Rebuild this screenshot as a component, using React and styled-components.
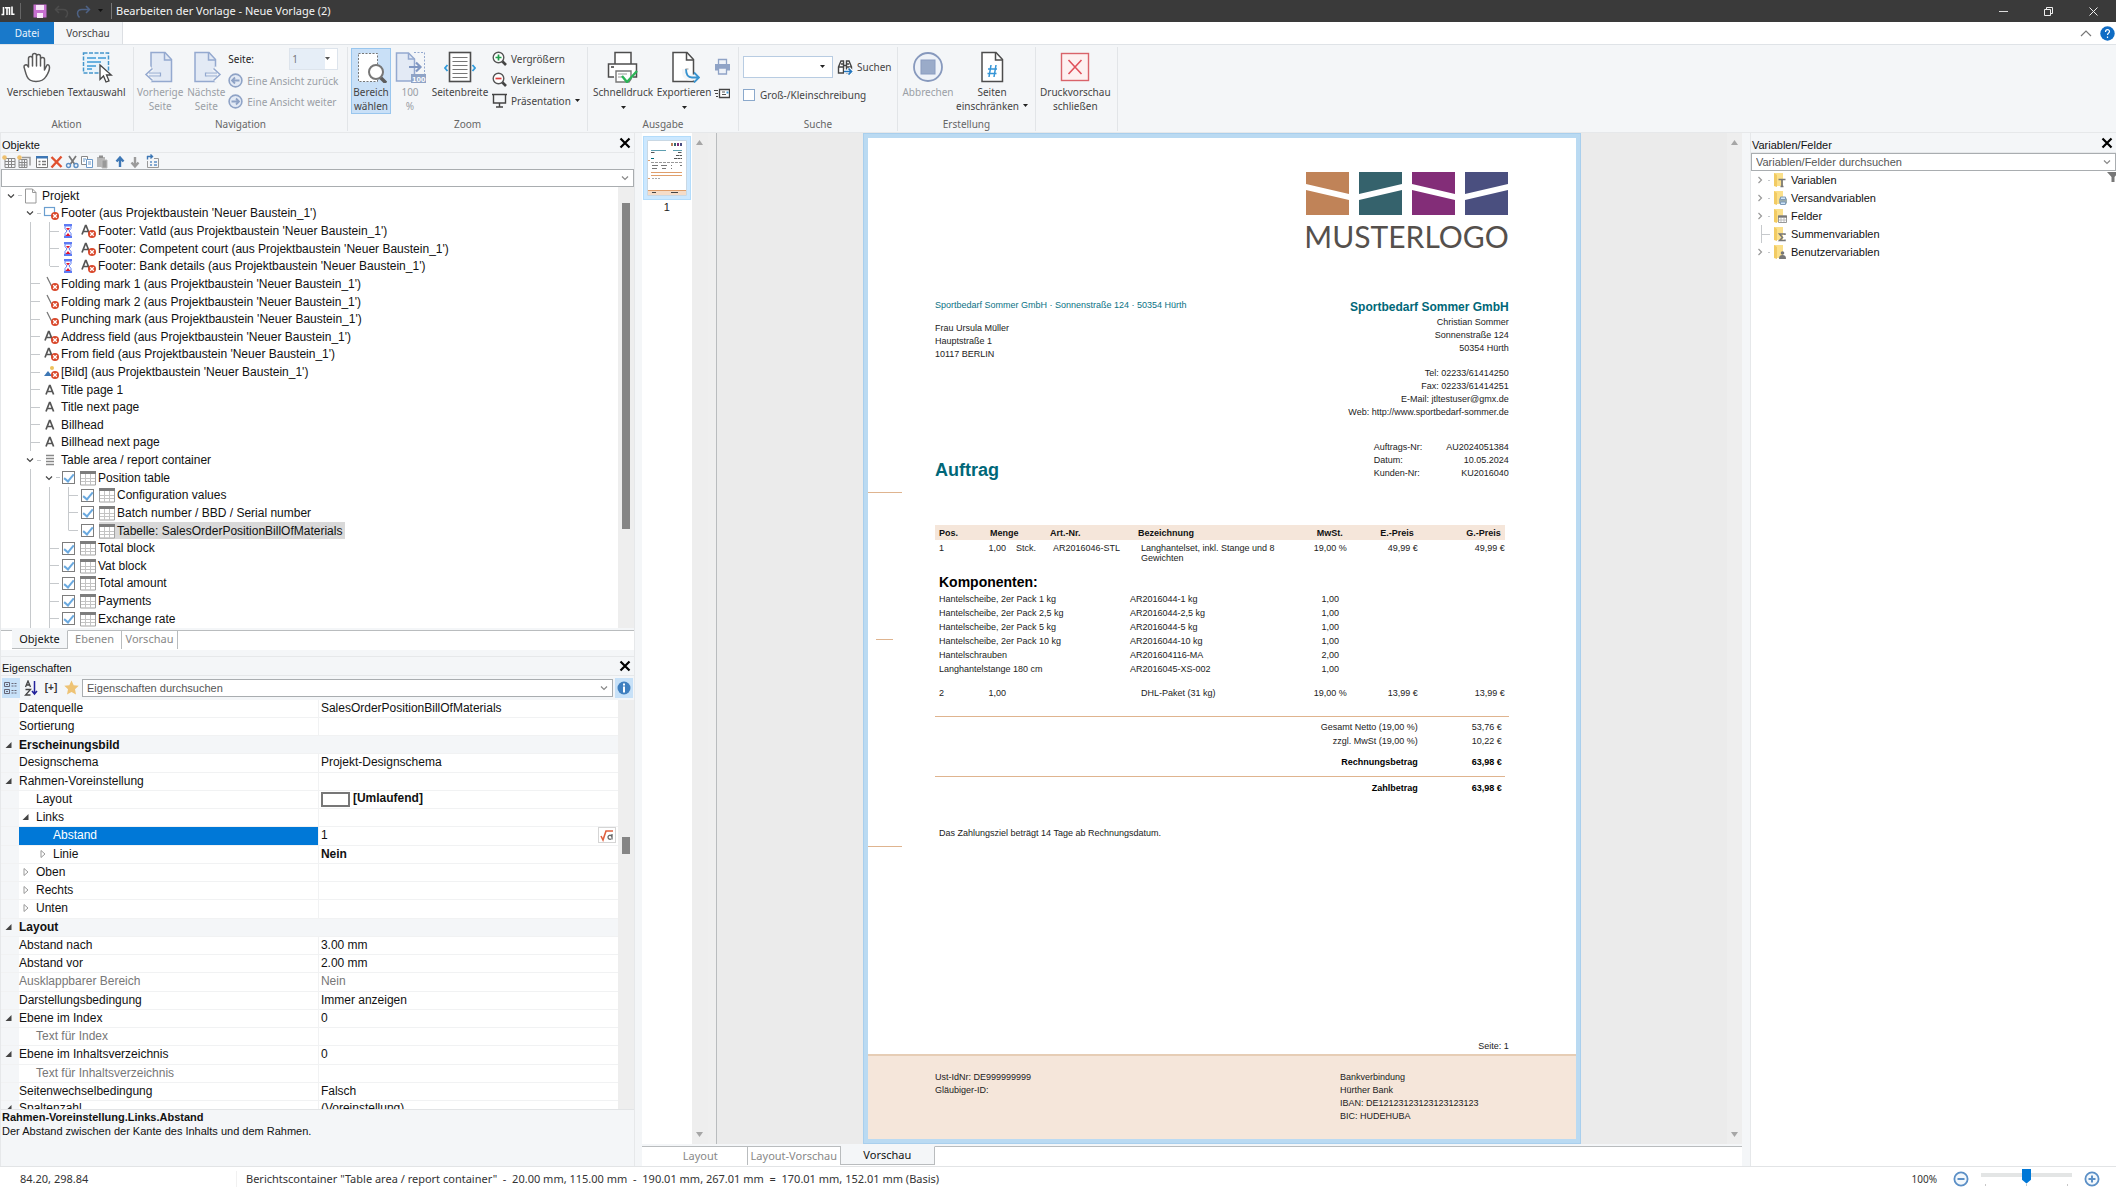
import React from 'react'
import styled, { createGlobalStyle, css } from 'styled-components'

const ui = `'Noto Sans', 'Open Sans', sans-serif`
const arial = `'Liberation Sans', Arial, sans-serif`

const GlobalStyle = createGlobalStyle`
  * { box-sizing: border-box; }
  html, body, #root { height: 100%; margin: 0; }
  body { font: 11px/16px ${ui}; color: #222; background: #fff; overflow: hidden; }
  button, input, select { font: inherit; color: inherit; margin: 0; }
  button { border: 0; padding: 0; background: none; }
  svg { display: block; flex: none; }
`

const Window = styled.div`
  display: flex;
  flex-direction: column;
  height: 100vh;
`

/* ---------- title bar ---------- */

const TitleBar = styled.header`
  display: flex;
  align-items: center;
  height: 22px;
  padding-left: 1px;
  background: #3a3a3a;
  color: #f4f4f4;
  font-size: 11px;
`

const QuickAccess = styled.div`
  display: flex;
  align-items: center;
  gap: 7px;
  margin-right: 4px;
  padding: 0 8px 0 3px;
  border-right: 1px solid #777;
`

const WindowButtons = styled.div`
  display: flex;
  margin-left: auto;

  button {
    display: grid;
    place-items: center;
    width: 45px;
    height: 22px;
  }
`

const MenuTabs = styled.nav`
  display: flex;
  align-items: center;
  height: 22px;
  font-size: 10px;
  color: #444;
`

const MenuTab = styled.button`
  align-self: stretch;
  width: ${p => (p.$file ? 54 : 69)}px;
  background: ${p => (p.$file ? '#1979ca' : '#f4f6f8')};
  color: ${p => (p.$file ? '#e8f3fc' : '#444')};
  border-right: ${p => (p.$file ? 0 : '1px solid #dcdfe3')};
`

const MenuEnd = styled.div`
  display: flex;
  align-items: center;
  gap: 8px;
  margin-left: auto;
  padding-right: 1px;
`

/* ---------- ribbon ---------- */

const Ribbon = styled.div`
  display: flex;
  height: 89px;
  border-top: 1px solid #dfe3e7;
  border-bottom: 1px solid #e6e8ea;
  background: #f4f6f8;
  font-size: 10px;
  line-height: 14px;
  color: #444;
`

const Group = styled.section`
  display: flex;
  flex-direction: column;
  width: ${p => p.$width}px;
  margin: 2px 0 1px;
  border-right: 1px solid #e2e5e8;
`

const GroupBody = styled.div`
  display: flex;
  flex: 1;
  align-items: flex-start;
  gap: ${p => p.$gap || 0}px;
  padding: 1px 0 0 ${p => p.$pad}px;
`

const GroupLabel = styled.div`
  height: 14px;
  text-align: center;
  color: #666;
`

const BigButton = styled.button`
  display: flex;
  flex-direction: column;
  align-items: center;
  gap: 2px;
  min-width: ${p => p.$width || 40}px;
  height: 66px;
  padding: 2px 0;
  border: 1px solid transparent;
  white-space: nowrap;
  color: ${p => (p.disabled ? '#9a9fa6' : '#444')};
  ${p =>
    p.$active &&
    css`
      background: #c9e0f7;
      border-color: #99c6ee;
    `}
`

const Stack = styled.div`
  display: flex;
  flex-direction: column;
  gap: ${p => p.$gap || 0}px;
  padding-top: ${p => p.$top || 0}px;
`

const SmallButton = styled.button`
  display: flex;
  align-items: center;
  gap: 4px;
  height: 21px;
  white-space: nowrap;
  color: ${p => (p.disabled ? '#9a9fa6' : '#444')};
`

const PageField = styled.label`
  display: flex;
  align-items: center;
  justify-content: space-between;
  height: 22px;
  color: #222;
`

const SelectBox = styled.span`
  display: grid;
  grid-template-columns: 1fr 12px;
  align-items: center;
  width: ${p => p.$width}px;
  height: 22px;
  border: 1px solid ${p => (p.$tint ? '#dde4ec' : '#b8cce2')};
  background: #fff;

  select,
  input {
    width: 100%;
    height: 100%;
    min-width: 0;
    padding: 0 2px;
    border: 0;
    border-radius: 0;
    appearance: none;
    background: ${p => (p.$tint ? '#e6eef7' : '#fff')};
    color: #777;
  }
`

const CheckLabel = styled.label`
  display: flex;
  align-items: center;
  gap: 5px;
`

const CheckBox = styled.input.attrs({ type: 'checkbox' })`
  appearance: none;
  flex: none;
  display: grid;
  place-items: center;
  width: ${p => p.$size || 12}px;
  height: ${p => p.$size || 12}px;
  border: 1px solid ${p => (p.$size ? '#7d7d7d' : '#8ba9cc')};
  background: #fff;

  &:checked::after {
    content: '';
    width: 4px;
    height: 8px;
    margin-bottom: 2px;
    border: solid #6aa9df;
    border-width: 0 2px 2px 0;
    transform: rotate(40deg);
  }
`

/* ---------- panels ---------- */

const Workspace = styled.main`
  display: grid;
  grid-template-columns: 30% minmax(0, 1fr) 17.3%;
  gap: 7px;
  flex: 1;
  min-height: 0;
  background: #f4f6f8;
`

const Dock = styled.aside`
  display: flex;
  flex-direction: column;
  min-width: 0;
  min-height: 0;
  border: solid #e6e8ea;
  border-width: 0 ${p => (p.$white ? 0 : 1)}px 0 1px;
  font-family: ${arial};
  font-size: ${p => p.$size || 12}px;
  color: #111;
  background: ${p => (p.$white ? '#fff' : '#f4f6f8')};
`

const DockTitle = styled.div`
  display: flex;
  align-items: center;
  justify-content: space-between;
  height: 20px;
  padding: 4px 3px 0 1px;
  border-bottom: 1px solid #e6e8ea;
  border-top: ${p => (p.$split ? '1px solid #e6e8ea' : 0)};
  margin-top: ${p => (p.$split ? 6 : 0)}px;
  background: #f4f6f8;

  h2 {
    margin: 0;
    font-size: 11px;
    font-weight: 400;
  }
  button {
    margin-top: -4px;
  }
`

const ObjectTools = styled.div`
  display: flex;
  align-items: center;
  height: 16px;
  padding-left: 1px;

  i {
    width: 3px;
  }
`

const Combo = styled.div`
  display: flex;
  align-items: center;
  flex: ${p => (p.$grow ? 1 : 'none')};
  height: 18px;
  padding-right: 4px;
  border: 1px solid #a9adb0;
  background: #fff;

  input {
    flex: 1;
    min-width: 0;
    padding: 0 4px;
    border: 0;
    background: none;
    outline: none;
    font-size: 11px;
  }
  input::placeholder {
    color: #555;
    opacity: 1;
  }
`

const Scrolled = styled.div`
  display: grid;
  grid-template-columns: minmax(0, 1fr) 16px;
  flex: ${p => p.$flex};
  min-height: 0;
  background: #fff;
`

const ScrollTrack = styled.div`
  display: flex;
  flex-direction: column;
  align-items: center;
  padding: ${p => p.$pad || '0'};
  justify-content: ${p => (p.$arrows ? 'space-between' : 'flex-start')};
  background: #eeeeee;
`

const ScrollThumb = styled.span`
  width: 8px;
  height: ${p => p.$height};
  margin-top: ${p => p.$top};
  margin-left: 1px;
  background: #858585;
`

const Tree = styled.ul`
  display: grid;
  grid-auto-rows: minmax(0, 1fr);
  margin: 0;
  padding: 0;
  list-style: none;
  overflow: hidden;
`

const TreeItem = styled.li`
  display: flex;
  align-items: center;
  white-space: nowrap;
`

const guide = '#c6c9cc'

const Guide = styled.span`
  align-self: stretch;
  width: 19px;
  background: ${p => (p.$on ? `linear-gradient(${guide}, ${guide}) 10px 0 / 1px 100% no-repeat` : 'none')};
`

const Branch = styled.span`
  display: flex;
  align-items: center;
  align-self: stretch;
  width: ${p => (p.$tight ? 19 : 22)}px;
  margin-right: 1px;
  padding-left: ${p => (p.$tight ? 5 : 6)}px;
  background: ${p =>
    p.$kind === 'leaf' || p.$kind === 'last'
      ? `linear-gradient(${guide}, ${guide}) 10px 0 / 1px ${p.$kind === 'last' ? '50%' : '100%'} no-repeat,
         linear-gradient(${guide}, ${guide}) 11px 50% / 9px 1px no-repeat`
      : `linear-gradient(${guide}, ${guide}) 17px 50% / 4px 1px no-repeat`};
`

const CheckSlot = styled.span`
  display: grid;
  width: 17px;
  margin-right: 1px;
`

const TreeName = styled.span`
  display: flex;
  align-items: center;
  align-self: stretch;
  gap: 2px;
  padding-right: 3px;
  background: ${p => (p.$selected ? '#d9d9d9' : 'none')};
`

const IconSlot = styled.span`
  display: grid;
  place-items: center;
  width: 16px;
`

const DockTabs = styled.div`
  display: flex;
  height: 22px;
  border-top: 2px solid #f4f6f8;
  background: #fff;
  font: 11px/16px ${ui};
`

const DockTab = styled.button`
  min-width: ${p => p.$width}px;
  height: 19px;
  padding-bottom: 1px;
  white-space: nowrap;
  border-top: 1px solid ${p => (p.$active ? '#f4f6f8' : '#b9bcbe')};
  border-right: 1px solid #b9bcbe;
  border-bottom: ${p => (p.$active ? '1px solid #b9bcbe' : 0)};
  background: ${p => (p.$active ? '#f4f6f8' : '#fff')};
  color: ${p => (p.$active ? '#111' : '#888')};
`

const TabRule = styled.span`
  width: ${p => p.$width || 'auto'};
  flex: ${p => (p.$width ? 'none' : 1)};
  border-top: 1px solid #b9bcbe;
`

/* ---------- properties ---------- */

const PropTools = styled.div`
  display: flex;
  align-items: center;
  gap: 2px;
  height: 24px;
  padding: 0 1px;
`

const ToolToggle = styled.button`
  display: grid;
  place-items: center;
  width: 18px;
  height: 20px;
  background: ${p => (p.$on ? '#c7e1f8' : 'none')};
  color: #333;
  font: bold 10px/16px ${arial};
`

const PropTable = styled.table`
  display: grid;
  min-height: 0;
  overflow: hidden;
  border-spacing: 0;

  tbody {
    display: grid;
    min-height: 0;
    grid-template-rows: repeat(22, minmax(0, 1fr)) 8px;
  }
`

const PropRow = styled.tr`
  display: grid;
  grid-template-columns: 18px minmax(0, 300fr) minmax(0, 301fr);
  min-height: 0;
  overflow: hidden;
  line-height: 14px;
  color: ${p => (p.$dim ? '#777' : '#111')};
  background: ${p => (p.$head ? '#f4f6f8' : 'linear-gradient(90deg, #f4f6f8 18px, #fff 18px)')};
`

const PropName = styled.th`
  display: flex;
  align-items: center;
  grid-column: ${p => (p.$head ? '1 / -1' : '1 / 3')};
  gap: 4px;
  padding: 0 0 ${p => (p.$head ? 0 : 1)}px ${p => p.$level * 17 + 4}px;
  text-align: left;
  font-weight: ${p => (p.$head ? 700 : 400)};
  white-space: nowrap;
  border-bottom: 1px solid #f1f2f3;
  ${p =>
    p.$selected &&
    css`
      color: #fff;
      background: linear-gradient(90deg, #f4f6f8 18px, #0078d7 18px);
    `}
`

const Twisty = styled.span`
  width: 10px;
`

const PropValue = styled.td`
  display: flex;
  align-items: center;
  justify-content: space-between;
  padding: 0 2px 1px;
  border: solid #f1f2f3;
  border-width: 0 0 1px 1px;
  font-weight: ${p => (p.$bold ? 700 : 400)};
  white-space: nowrap;
`

const Swatch = styled.span`
  display: inline-block;
  width: 29px;
  height: 15px;
  margin-right: 3px;
  vertical-align: middle;
  border: 2px solid #777;
`

const FormulaButton = styled.button`
  display: grid;
  place-items: center;
  width: 18px;
  height: 16px;
  border: 1px solid #d5d5d5;
`

const HelpText = styled.div`
  height: 57px;
  padding: 0 1px;
  border-top: 1px solid #e2e4e6;
  font-size: 11px;
  line-height: 14px;

  p, h3 {
    margin: 0;
    font-size: inherit;
  }
`

/* ---------- preview ---------- */

const Center = styled.section`
  display: flex;
  flex-direction: column;
  min-width: 0;
  min-height: 0;
  margin-right: 1px;
`

const PreviewArea = styled.div`
  display: grid;
  grid-template-columns: 50px 16px 9px minmax(0, 1fr) 15px;
  flex: 1;
  min-height: 0;
`

const Thumbs = styled.div`
  background: #fff;
  padding: 3px 1px;
  text-align: center;
  font: 11px/14px ${arial};
`

const Thumb = styled.button`
  display: grid;
  place-items: center;
  width: 100%;
  height: 64px;
  background: #cce8ff;
  border: 1px solid #b3dcfb;
`

const Splitter = styled.div`
  background: #efefef;
  border-right: 1px solid #b9bcbe;
`

const Canvas = styled.div`
  display: flex;
  justify-content: center;
  min-height: 0;
  background: #ebebeb;
`

const PageFrame = styled.div`
  display: flex;
  height: 100%;
  padding: 4px;
  border: 1px solid #a9cfed;
  background: #badaf2;
`

const Paper = styled.article`
  position: relative;
  display: flex;
  flex-direction: column;
  height: 100%;
  aspect-ratio: 210 / 297;
  background: #fff;
  font: 9px/13px ${arial};
  color: #222;
`

const FoldMark = styled.span`
  position: absolute;
  left: ${p => (p.$punch ? '1.2%' : 0)};
  top: ${p => p.$top};
  width: ${p => (p.$punch ? '2.4%' : '4.8%')};
  border-top: 1px solid #dfb48f;
`

const Letter = styled.div`
  display: flex;
  flex-direction: column;
  flex: 1;
  padding: 34px 67px 0;
`

const Logo = styled.div`
  display: flex;
  flex-direction: column;
  align-self: flex-end;
  align-items: flex-end;
  gap: 3px;
  height: 82px;
  font: 30px/36px Lato, sans-serif;
  color: #55504c;
`

const LetterHead = styled.div`
  display: flex;
  justify-content: space-between;
  height: 271px;
  padding-top: 45px;
`

const Address = styled.address`
  display: flex;
  flex-direction: column;
  font-style: normal;
  text-align: ${p => (p.$right ? 'right' : 'left')};

  small {
    font-size: 9px;
    color: #0b7285;
    margin-bottom: 10px;
  }
  strong {
    font-size: 12px;
    line-height: 17px;
    color: #006778;
  }
`

const Phone = styled.span`
  margin-top: 12px;
`

const DocTitle = styled.h1`
  margin: auto 0 44px;
  font-size: 18px;
  line-height: 22px;
  color: #006778;
`

const Meta = styled.dl`
  display: grid;
  grid-template-columns: auto auto;
  column-gap: 24px;
  justify-content: end;
  margin: 22px 0 0;
  text-align: left;

  dd {
    margin: 0;
    text-align: right;
  }
`

const Items = styled.table`
  width: calc(100% - 4px);
  table-layout: fixed;
  border-collapse: collapse;
  line-height: 10px;

  th {
    height: 15px;
    padding: 0 4px;
    text-align: left;
    background: #f5e6da;
    color: #111;
  }
  td {
    padding: 3px 0 0 7px;
    vertical-align: top;
  }
  td:first-child {
    padding-left: 4px;
  }
  .num {
    text-align: right;
  }
  td.num {
    padding-left: 0;
  }
  td.unit {
    padding-left: 10px;
  }
`

const Components = styled.table`
  width: calc(100% - 4px);
  table-layout: fixed;
  border-collapse: collapse;
  margin: 9px 0;
  line-height: 14px;

  caption {
    padding-left: 4px;
    text-align: left;
    font-size: 14px;
    line-height: 20px;
    font-weight: 700;
    color: #000;
  }
  td {
    padding: 0 4px;
  }
  td:nth-child(3) {
    text-align: right;
    padding-right: 8px;
  }
`

const Totals = styled.table`
  width: ${p => (p.$wide ? '100%' : 'calc(100% - 4px)')};
  margin-top: ${p => p.$top}px;
  border-spacing: 0;
  border-top: 1px solid #dfb48f;
  padding-top: ${p => (p.$wide ? 3 : 4)}px;
  line-height: 14px;

  td, th {
    padding: 0;
    text-align: right;
    font-weight: inherit;
  }
  td {
    width: ${p => (p.$wide ? 91 : 87)}px;
    padding-right: ${p => (p.$wide ? 7 : 3)}px;
  }
  tr.sum {
    font-weight: 700;
    color: #000;
  }
  tr + tr.sum > * {
    padding-top: 7px;
  }
`

const Terms = styled.p`
  margin: 32px 4px 0;
`

const PageNo = styled.p`
  margin: auto 0 1px;
  text-align: right;
`

const PaperFoot = styled.footer`
  display: grid;
  grid-template-columns: 405px 1fr;
  height: 85px;
  padding: 15px 67px 0;
  border-top: 2px solid #e6cdb5;
  background: #f5e6da;

  p {
    margin: 0;
    white-space: pre-line;
  }
`

/* ---------- variables, status ---------- */

const VarItem = styled.li`
  display: flex;
  align-items: center;
  gap: 2px;
  height: 18px;
`

const VarItemIcon = styled.span`
  display: flex;
  width: 16px;
`

const VarList = styled.ul`
  flex: 1;
  margin: 0;
  padding: 0;
  list-style: none;
`

const FilterRow = styled.div`
  display: flex;
  align-items: flex-start;
  background: #fff;
  flex: 1;
`

const Status = styled.footer`
  display: flex;
  align-items: center;
  height: 25px;
  border-top: 1px solid #e2e4e6;
  background: #fff;
  color: #333;
`

const Coords = styled.span`
  width: 237px;
  padding-left: 20px;
  border-right: 1px solid #f1f1f1;
`

const ObjectInfo = styled.span`
  flex: 1;
  padding-left: 9px;
  white-space: pre;
`

const ZoomTools = styled.div`
  display: flex;
  align-items: center;
  align-self: stretch;
  gap: 16px;
  padding-right: 16px;
  font-size: 10px;
`

const ZoomScale = styled.div`
  display: flex;
  flex-direction: column;
  align-self: flex-start;
  width: 91px;
  margin: 0 -4px;
  padding-top: 1px;
`

const ZoomSlider = styled.input.attrs({ type: 'range' })`
  appearance: none;
  width: 100%;
  height: 16px;
  background: linear-gradient(#e3e5e5, #e3e5e5) 0 5px / 100% 4px no-repeat;

  &::-webkit-slider-thumb {
    appearance: none;
    width: 9px;
    height: 15px;
    background: #0078d7;
    clip-path: polygon(0 0, 100% 0, 100% 75%, 50% 100%, 0 75%);
  }
`

const Ticks = styled.div`
  display: flex;
  justify-content: space-between;
  padding: 0 4px;

  i {
    width: 1px;
    height: 2px;
    background: #c8c8c8;
  }
`

/* ---------- icons ---------- */

const Svg = ({ s = 16, w, h, children, ...rest }) => (
  <svg
    width={w || s}
    height={h || s}
    viewBox={`0 0 ${w || s} ${h || s}`}
    fill="none"
    aria-hidden="true"
    {...rest}
  >
    {children}
  </svg>
)

const Caret = ({ color = '#222' }) => (
  <Svg w={5} h={4}>
    <path d="M0 0h5L2.5 3z" fill={color} />
  </Svg>
)

const Chevron = ({ dir = 'down', color = '#444' }) => (
  <Svg s={8}>
    <path d={dir === 'down' ? 'M1 2.5l3 3 3-3' : 'M2.5 1l3 3-3 3'} stroke={color} strokeWidth="1.2" />
  </Svg>
)

const CloseX = () => (
  <Svg s={12}>
    <path d="M1.5 1.5l9 9M10.5 1.5l-9 9" stroke="#000" strokeWidth="2.2" />
  </Svg>
)

const HandIcon = () => (
  <Svg s={32}>
    <path
      d="M8.500 19V8.500a2 2 0 0 1 4 0V15v-9.500a2 2 0 0 1 4 0V15V4.500a2 2 0 0 1 4 0V15V7.500a2 2 0 0 1 4 0V16l1-1.500a2 2 0 0 1 3.500 1.500c-1 3-1.500 6-3 9.500-1.500 3.500-5 5-9 5s-8-1.500-10-5c-2-3-3.500-6-3.500-9 0-2 1-3 2.500-2.500z"
      fill="#fff"
      stroke="#5a5a5a"
      strokeWidth="1.500"
      strokeLinejoin="round"
      transform="translate(33 0) scale(-1 1)"
    />
  </Svg>
)

const TextSelectIcon = () => (
  <Svg s={32}>
    <rect x="2.500" y="2" width="25" height="20" fill="#eaf4fb" stroke="#4596cc" strokeWidth="1.500" strokeDasharray="4 1.500" />
    <path d="M6 7h9M17 7h8M6 11h14M6 15h9M6 18h5" stroke="#3f9bd8" strokeWidth="1.300" />
    <path d="M19 14v14.500l3.500-3.500 2.500 6 3-1.200-2.500-5.800h4.800z" fill="#fff" stroke="#444" strokeWidth="1.300" />
  </Svg>
)

const PagePath = ({ color, fill = '#fff', x = 0 }) => (
  <g transform={`translate(${x} 0)`}>
    <path d="M6 1.500h14l6.500 7v22H6z" fill={fill} stroke={color} strokeWidth="1.500" />
    <path d="M19.500 1.500V9H26.500" stroke={color} strokeWidth="1.500" />
  </g>
)

const PrevPageIcon = ({ next }) => (
  <Svg s={32}>
    <PagePath color="#94a9cf" fill="#e3eaf5" x={next ? -1 : 1} />
    <g transform={next ? 'translate(32 0) scale(-1 1)' : undefined}>
      <path d="M8 17l-6 6.500 6 6.500M3 23.500h12" stroke="#f4f6f8" strokeWidth="5" />
      <path d="M8.500 17.500l-6.500 6 6.500 6" stroke="#94a9cf" strokeWidth="1.500" />
      <path d="M5 22h11.500v3H5" fill="#e9eef7" stroke="#94a9cf" strokeWidth="1.200" />
    </g>
  </Svg>
)

const ViewArrow = ({ next }) => (
  <Svg s={15}>
    <circle cx="7.500" cy="7.500" r="6.400" fill="#e3eaf5" stroke="#8fa3c6" strokeWidth="1.600" />
    <path
      d={next ? 'M3.500 7.500h7M8 4.500l3 3-3 3' : 'M11.500 7.500h-7M7 4.500l-3 3 3 3'}
      stroke="#8fa3c6"
      strokeWidth="1.800"
    />
  </Svg>
)

const ZoomAreaIcon = () => (
  <Svg s={32}>
    <rect x="3.500" y="2.500" width="19" height="28" fill="#fff" stroke="#777" strokeDasharray="2 1.500" />
    <path d="M25 26l6 6" stroke="#5d5d5d" strokeWidth="3.500" />
    <circle cx="21" cy="21" r="7" fill="#fff" stroke="#777" strokeWidth="2" />
  </Svg>
)

const Zoom100Icon = () => (
  <Svg s={32}>
    <path d="M2.500 2h12l6 6v22h-18z" fill="#e3eaf5" stroke="#94a9cf" strokeWidth="1.500" />
    <path d="M14.500 2v6h6" stroke="#94a9cf" strokeWidth="1.500" />
    <path d="M20 1.500h10.500V24" stroke="#94a9cf" strokeDasharray="2 1.500" />
    <path d="M15 16h11M22 11.500l4.500 4.500-4.500 4.500" stroke="#8097c2" strokeWidth="2.200" />
    <rect x="17" y="23" width="15" height="9" fill="#8fa3c6" />
    <text x="18" y="30.500" fontSize="8" fontWeight="700" fill="#fff" fontFamily="Liberation Sans">100</text>
  </Svg>
)

const PageWidthIcon = () => (
  <Svg s={32}>
    <rect x="5.500" y="1.500" width="21" height="29" fill="#fff" stroke="#4d4d4d" strokeWidth="1.600" />
    <path d="M8.500 6.500h15M8.500 10.500h15M8.500 14.500h15M8.500 18.500h15M8.500 22.500h15M8.500 26.500h15" stroke="#777" />
    <path d="M3.500 14l-2.500 3 2.500 3M28.500 14l2.500 3-2.500 3" stroke="#2f9bdc" strokeWidth="1.800" />
  </Svg>
)

const LensIcon = ({ plus }) => (
  <Svg s={15}>
    <path d="M9.500 9.500l4.500 4.500" stroke="#444" strokeWidth="2.600" />
    <circle cx="6.500" cy="6.500" r="5.300" fill="#fff" stroke="#555" strokeWidth="1.400" />
    <path d={plus ? 'M3.500 6.500h6M6.500 3.500v6' : 'M3.500 6.500h6'} stroke={plus ? '#1e9e4a' : '#e03c3c'} strokeWidth="1.700" />
  </Svg>
)

const ScreenIcon = () => (
  <Svg s={15}>
    <path d="M0 1.500h15M1.500 1.500v8.500h12V1.500M7.500 10v4M4 14h7" stroke="#444" strokeWidth="1.400" />
  </Svg>
)

const PrinterIcon = () => (
  <Svg s={32}>
    <path d="M8 13V1.500h16V13" fill="#fff" stroke="#4d4d4d" strokeWidth="1.500" />
    <path d="M7 26H1.500V13h28v13H26" fill="#fff" stroke="#4d4d4d" strokeWidth="1.500" />
    <path d="M4 16h3" stroke="#444" strokeWidth="1.600" />
    <path d="M9 20h15v8l-2 3H9z" fill="#fff" stroke="#777" strokeWidth="1.400" />
    <path d="M11 23h9M11 26h5" stroke="#999" />
    <path d="M15 25l5 6 10-11" stroke="#2cb457" strokeWidth="2.400" />
  </Svg>
)

const ExportIcon = () => (
  <Svg s={32}>
    <PagePath color="#4d4d4d" x={-1} />
    <path d="M17 18v3.500c0 3 2 5 5 5h8" stroke="#f4f6f8" strokeWidth="6" />
    <path d="M18 18c0 6 2 8.500 6 8.500h6M26 21.500l5 5-5 5" stroke="#3994d0" strokeWidth="1.800" />
    <path d="M17.500 18h3" stroke="#999" />
  </Svg>
)

const SmallPrinter = () => (
  <Svg s={17}>
    <path d="M4.500 6V1.500h8V6" fill="#eef2f8" stroke="#8fa3c6" strokeWidth="1.300" />
    <path d="M1 6h15v6.500H1z" fill="#8fa3c6" />
    <path d="M4.500 10h8v6h-8z" fill="#eef2f8" stroke="#8fa3c6" strokeWidth="1.300" />
  </Svg>
)

const MailIcon = () => (
  <Svg w={16} h={12}>
    <path d="M5.500 1.500h10v8h-10z" fill="#fff" stroke="#444" strokeWidth="1.300" />
    <path d="M8 4h3M8 6.500h4" stroke="#555" />
    <path d="M12.500 3.500h2v2h-2z" fill="#3f9bd8" />
    <path d="M0 2.500h4M1 5.500h3M2 8.500h2" stroke="#444" />
  </Svg>
)

const BinocularsIcon = () => (
  <Svg s={16}>
    <path d="M1.500 14V8l2.500-6h2.500v12zM14.500 14V8L12 2H9.500v12z" fill="#fff" stroke="#444" strokeWidth="1.400" />
    <path d="M2 8h4M10 8h4M6.500 6.500h3M4 5h2M10 5h2" stroke="#444" strokeWidth="1.600" />
    <path d="M7 12.500h7M11.500 9.500l3 3-3 3" stroke="#fff" strokeWidth="4" />
    <path d="M7 12.500h7.500M11.500 9.500l3 3-3 3" stroke="#2476bd" strokeWidth="1.700" />
  </Svg>
)

const StopIcon = () => (
  <Svg s={32}>
    <circle cx="16" cy="16" r="14" fill="#eef2f8" stroke="#8799bd" strokeWidth="1.800" />
    <rect x="9" y="9" width="14" height="14" fill="#9aabc9" stroke="#8a9cc0" />
  </Svg>
)

const HashPageIcon = () => (
  <Svg s={32}>
    <PagePath color="#4d4d4d" />
    <path d="M15 14l-2 12M20 14l-2 12M12 18h9M11.500 22.500h9" stroke="#3595d6" strokeWidth="1.500" />
  </Svg>
)

const ClosePreviewIcon = () => (
  <Svg s={32}>
    <rect x="2.500" y="2.500" width="27" height="27" fill="#fdf1f1" stroke="#d9636a" strokeWidth="1.400" />
    <path d="M9.500 9l13 14M22.500 9l-13 14" stroke="#e0525c" strokeWidth="1.600" />
  </Svg>
)

const BadgeX = ({ x = 8, y = 7 }) => (
  <g>
    <circle cx={x + 4} cy={y + 4} r="4" fill="#d9482b" />
    <path d={`M${x + 2.2} ${y + 2.2}l3.600 3.600m0-3.600l-3.600 3.600`} stroke="#fff" strokeWidth="1.300" />
  </g>
)

const ObjIcon = ({ type }) => {
  const locked = type.endsWith('!')
  const base = type.replace('!', '')
  return (
    <Svg>
      {base === 'page' && <path d="M1.500 1h7l3.500 3.500v10.500H1.500zM8.500 1v3.500H12" fill="#fff" stroke="#999" />}
      {base === 'frame' && <rect x="1.500" y="2.500" width="10" height="8" stroke="#6b9fd0" strokeWidth="1.200" />}
      {base === 'text' && (
        <path
          d="M3 12.500L6.500 3.500h.6l3.500 9M4.500 9.500h5"
          stroke="#555"
          strokeWidth="1.700"
          transform={locked ? 'translate(-1 -1)' : undefined}
        />
      )}
      {base === 'line' && <path d="M4 1l5 10" stroke="#777" strokeWidth="1.300" />}
      {base === 'image' && (
        <g>
          <path d="M1 12l4-5 4 5z" fill="#3d77b5" />
          <circle cx="9" cy="4" r="2" fill="#edc25c" />
        </g>
      )}
      {base === 'list' && <path d="M3 3.500h8M3 6.500h8M3 9.500h8M3 12.500h8" stroke="#888" strokeWidth="1.300" />}
      {base === 'table' && (
        <g>
          <path d="M.5 1.500h15v13.500H.5z" fill="#fff" stroke="#a3a3a3" />
          <path d="M1 8.500h14M1 11.500h14M5.500 4v11M10.500 4v11" stroke="#c4c4c4" />
          <path d="M0 1h16v3H0z" fill="#7d7d7d" />
        </g>
      )}
      {locked && <BadgeX />}
    </Svg>
  )
}

const Hourglass = () => (
  <Svg w={12} h={14}>
    <path d="M2 1h8M2 13h8" stroke="#2a50f0" strokeWidth="1.500" />
    <path d="M3 2v2.500L5 7 3 9.500V12h6V9.500L7 7l2-2.500V2z" fill="#fff" stroke="#5f7df5" />
    <path d="M4 4h4L6 6.500zM3.500 12L6 9l2.500 3z" fill="#e0142c" />
  </Svg>
)

const ToolIcon = ({ type }) => {
  const shapes = {
    add: (
      <g>
        <path d="M3 4.500h10v9H3zM3 7.500h10M3 10.500h10M6.500 5v8M9.500 5v8" stroke="#888" />
        <circle cx="2.500" cy="3.500" r="2.300" fill="#eec06f" />
      </g>
    ),
    addPage: (
      <g>
        <path d="M2 5.500h8v8H2zM2 8.500h8M2 11h8M5 6v7M7.500 6v7" stroke="#888" />
        <path d="M5 3.500h8v8" stroke="#999" strokeWidth="1.500" />
        <circle cx="2.500" cy="3.500" r="2.300" fill="#eec06f" />
      </g>
    ),
    props: (
      <g>
        <path d="M1.500 2.500h11v11h-11z" fill="#fff" stroke="#777" />
        <path d="M1 2h12v2.500H1z" fill="#3d77b5" />
        <path d="M3.500 7.500h2M7 7.500h4M3.500 10.500h2M7 10.500h4" stroke="#777" strokeWidth="1.300" />
      </g>
    ),
    del: <path d="M1.500 3l10 10M11.500 2.500l-10 11" stroke="#e0512f" strokeWidth="2.400" />,
    cut: (
      <g>
        <path d="M4 2l5.500 8M11 2L5.500 10" stroke="#777" strokeWidth="1.700" />
        <circle cx="3.500" cy="11.500" r="2" stroke="#5c8fc4" strokeWidth="1.400" />
        <circle cx="11" cy="11.500" r="2" stroke="#5c8fc4" strokeWidth="1.400" />
      </g>
    ),
    copy: (
      <g>
        <path d="M1.500 2.500h6v8h-6z" fill="#fff" stroke="#888" />
        <path d="M6.500 5.500h6v8h-6z" fill="#fff" stroke="#6d9ac9" />
        <path d="M8 8h3M8 10h3M3 5h3M3 7h2" stroke="#6d9ac9" />
      </g>
    ),
    paste: (
      <g>
        <path d="M2 3h8v10H2z" fill="#b5b5b5" />
        <path d="M4 1.500h4v2.500H4z" fill="#8f8f8f" />
        <path d="M7 6h5v8H7z" fill="#999" stroke="#bbb" />
      </g>
    ),
    up: <path d="M7 13V4M3.500 7.500L7 3.500l3.500 4" stroke="#3d77b5" strokeWidth="2.400" />,
    down: <path d="M7 3v9M3.500 8.500L7 12.500l3.500-4" stroke="#9b9b9b" strokeWidth="2.400" />,
    refs: (
      <g>
        <path d="M1.500 7v6.500h11v-9H8" stroke="#999" />
        <path d="M1 2.500h5M4.500.500l2 2-2 2M1.500 2v3.500" stroke="#3d77b5" strokeWidth="1.400" />
        <path d="M4 8h2M4 11h2M8 8h3M8 11h3" stroke="#5c8fc4" strokeWidth="1.600" />
      </g>
    ),
  }
  return <Svg s={15}>{shapes[type]}</Svg>
}

const RoundZoom = ({ plus }) => (
  <Svg s={16}>
    <circle cx="8" cy="8" r="6.600" fill="#f3f8fc" stroke="#5b8fc6" strokeWidth="1.800" />
    <path d={plus ? 'M4.500 8h7M8 4.500v7' : 'M4.500 8h7'} stroke="#5b8fc6" strokeWidth="2" />
  </Svg>
)

const FolderIcon = ({ type }) => (
  <Svg>
    <path d="M1 1h9v13H1z" fill="#fbe08b" />
    <path d="M1 1l3 2v12l-3-1z" fill="#f2cb63" />
    {type === 'T' && <path d="M5.500 7.500h7M9 7.500V15M7.500 14.500h3" stroke="#777" strokeWidth="1.700" />}
    {type === 'print' && (
      <g>
        <path d="M6 8.500h8v5H6z" fill="#9aa" />
        <path d="M7.500 7h5v2.500h-5zM7.500 12h5v2.500h-5z" fill="#cfe5f7" stroke="#7d9ab8" />
      </g>
    )}
    {type === 'table' && (
      <g>
        <path d="M5.500 8h8v6.500h-8z" fill="#fff" stroke="#999" />
        <path d="M5 7.500h9v2.200H5z" fill="#777" />
        <path d="M8 10v4M11 10v4M6 12h7" stroke="#bbb" />
      </g>
    )}
    {type === 'sum' && <path d="M12 9V8H6.500l3 3.500-3 3H12v-1" stroke="#777" strokeWidth="1.500" />}
    {type === 'user' && (
      <g fill="#777">
        <circle cx="9.500" cy="9" r="1.800" />
        <path d="M6 15c0-3 1-4 3.500-4s3.500 1 3.500 4z" />
      </g>
    )}
  </Svg>
)

const PageThumbnail = () => (
  <Svg w={40} h={56}>
    <path d="M.5.500h39v55H.5z" fill="#fff" stroke="#c9d8e4" />
    <path d="M24 4.500h2" stroke="#bf8259" strokeWidth="3" />
    <path d="M27 4.500h2" stroke="#35616b" strokeWidth="3" />
    <path d="M30 4.500h2" stroke="#7f2c79" strokeWidth="3" />
    <path d="M33 4.500h2" stroke="#4a4f80" strokeWidth="3" />
    <path d="M4 10.500h15M26 10.500h9" stroke="#5f9fb0" />
    <path d="M4 12.500h4M31 12.500h4M29 15.500h6M27 18.500h8" stroke="#555" strokeDasharray="3 .5" />
    <path d="M4 18.500h3" stroke="#006778" />
    <path d="M4 22.500h31" stroke="#999" strokeDasharray="3 1" />
    <path d="M5 25.500h6M14 25.500h6M24 25.500h1M33 25.500h2M5 28.500h5M15 28.500h4M24 28.500h1" stroke="#777" />
    <path d="M4 32.500h31M4 35.500h31M1 20.500h2M1 38.500h2" stroke="#df9e6b" />
    <path d="M5 38.500h9" stroke="#aaa" strokeDasharray="2 1" />
    <path d="M1 51h38v4H1z" fill="#f5dcc8" />
    <path d="M1 50.500h38" stroke="#df9e6b" />
    <path d="M5 52.500h4M24 52.500h7" stroke="#444" />
  </Svg>
)

const LogoTiles = () => (
  <Svg w={203} h={43}>
    {['#c08358', '#35626c', '#832d78', '#4a4f7f'].map((fill, i) => (
      <g key={fill} transform={`translate(${i * 53} 0)`} fill={fill}>
        <path d={i % 2 ? 'M0 0h43v12L0 22z' : 'M0 0h43v22L0 12z'} />
        <path d={i % 2 ? 'M0 28l43-10v25H0z' : 'M0 18l43 10v15H0z'} />
      </g>
    ))}
  </Svg>
)

/* ---------- data ---------- */

const aus = " (aus Projektbaustein 'Neuer Baustein_1')"

const objects = [
  { level: 0, kind: 'open', icon: 'page', name: 'Projekt' },
  { level: 1, kind: 'open', icon: 'frame!', name: 'Footer' + aus },
  { level: 2, kind: 'leaf', glass: true, icon: 'text!', name: 'Footer: VatId' + aus },
  { level: 2, kind: 'leaf', glass: true, icon: 'text!', name: 'Footer: Competent court' + aus },
  { level: 2, kind: 'last', glass: true, icon: 'text!', name: 'Footer: Bank details' + aus },
  { level: 1, kind: 'leaf', icon: 'line!', name: 'Folding mark 1' + aus },
  { level: 1, kind: 'leaf', icon: 'line!', name: 'Folding mark 2' + aus },
  { level: 1, kind: 'leaf', icon: 'line!', name: 'Punching mark' + aus },
  { level: 1, kind: 'leaf', icon: 'text!', name: 'Address field' + aus },
  { level: 1, kind: 'leaf', icon: 'text!', name: 'From field' + aus },
  { level: 1, kind: 'leaf', icon: 'image!', name: '[Bild]' + aus },
  { level: 1, kind: 'leaf', icon: 'text', name: 'Title page 1' },
  { level: 1, kind: 'leaf', icon: 'text', name: 'Title next page' },
  { level: 1, kind: 'leaf', icon: 'text', name: 'Billhead' },
  { level: 1, kind: 'leaf', icon: 'text', name: 'Billhead next page' },
  { level: 1, kind: 'open', icon: 'list', name: 'Table area / report container' },
  { level: 2, kind: 'open', check: true, icon: 'table', name: 'Position table' },
  { level: 3, kind: 'leaf', check: true, icon: 'table', name: 'Configuration values' },
  { level: 3, kind: 'leaf', check: true, icon: 'table', name: 'Batch number / BBD / Serial number' },
  { level: 3, kind: 'last', check: true, icon: 'table', name: 'Tabelle: SalesOrderPositionBillOfMaterials', selected: true },
  { level: 2, kind: 'leaf', check: true, icon: 'table', name: 'Total block' },
  { level: 2, kind: 'leaf', check: true, icon: 'table', name: 'Vat block' },
  { level: 2, kind: 'leaf', check: true, icon: 'table', name: 'Total amount' },
  { level: 2, kind: 'leaf', check: true, icon: 'table', name: 'Payments' },
  { level: 2, kind: 'leaf', check: true, icon: 'table', name: 'Exchange rate' },
]

const properties = [
  { name: 'Datenquelle', value: 'SalesOrderPositionBillOfMaterials' },
  { name: 'Sortierung' },
  { name: 'Erscheinungsbild', head: true, state: 'open' },
  { name: 'Designschema', value: 'Projekt-Designschema' },
  { name: 'Rahmen-Voreinstellung', state: 'open' },
  { name: 'Layout', level: 1, value: '[Umlaufend]', bold: true, swatch: true },
  { name: 'Links', level: 1, state: 'open' },
  { name: 'Abstand', level: 2, value: '1', selected: true },
  { name: 'Linie', level: 2, value: 'Nein', bold: true, state: 'closed' },
  { name: 'Oben', level: 1, state: 'closed' },
  { name: 'Rechts', level: 1, state: 'closed' },
  { name: 'Unten', level: 1, state: 'closed' },
  { name: 'Layout', head: true, state: 'open' },
  { name: 'Abstand nach', value: '3.00 mm' },
  { name: 'Abstand vor', value: '2.00 mm' },
  { name: 'Ausklappbarer Bereich', value: 'Nein', dim: true },
  { name: 'Darstellungsbedingung', value: 'Immer anzeigen' },
  { name: 'Ebene im Index', value: '0', state: 'open' },
  { name: 'Text für Index', level: 1, dim: true },
  { name: 'Ebene im Inhaltsverzeichnis', value: '0', state: 'open' },
  { name: 'Text für Inhaltsverzeichnis', level: 1, dim: true },
  { name: 'Seitenwechselbedingung', value: 'Falsch' },
  { name: 'Spaltenzahl', value: '(Voreinstellung)', state: 'open' },
]

const parts = [
  ['Hantelscheibe, 2er Pack 1 kg', 'AR2016044-1 kg', '1,00'],
  ['Hantelscheibe, 2er Pack 2,5 kg', 'AR2016044-2,5 kg', '1,00'],
  ['Hantelscheibe, 2er Pack 5 kg', 'AR2016044-5 kg', '1,00'],
  ['Hantelscheibe, 2er Pack 10 kg', 'AR2016044-10 kg', '1,00'],
  ['Hantelschrauben', 'AR201604116-MA', '2,00'],
  ['Langhantelstange 180 cm', 'AR2016045-XS-002', '1,00'],
]

const variables = [
  ['Variablen', 'T'],
  ['Versandvariablen', 'print'],
  ['Felder', 'table'],
  ['Summenvariablen', 'sum'],
  ['Benutzervariablen', 'user'],
]

/* ---------- sections ---------- */

const Header = () => (
  <>
    <TitleBar>
      <Svg w={14} h={12}>
        <path d="M.5 9.500H2.500V2M4 2.700h4M6 2.700V10M8.500 2v8M11 1.500v7.800h2.500" stroke="#fff" strokeWidth="1.600" />
      </Svg>
      <QuickAccess>
        <Svg w={8} h={16}>
          <path d="M2.500 0v16" stroke="#666" />
        </Svg>
        <Svg s={14}>
          <path d="M.5.500h13v13H.5z" fill="#c66fd0" />
          <path d="M3 1h8v5H3zM4 9h6v5H4z" fill="#f7e6f9" />
        </Svg>
        <Svg s={15}>
          <path d="M5 2L1.500 5.500 5 9M2 5.500h7c3 0 4.500 2 4.500 4s-1 3-2 4" stroke="#4c4c4c" strokeWidth="1.500" />
        </Svg>
        <Svg s={15}>
          <path d="M10 2l3.500 3.500L10 9M13 5.500H6c-3 0-4.500 2-4.500 4s1 3 2 4" stroke="#4e6285" strokeWidth="1.500" />
        </Svg>
        <Caret color="#111" />
      </QuickAccess>
      Bearbeiten der Vorlage - Neue Vorlage (2)
      <WindowButtons>
        <button aria-label="Minimieren">
          <Svg s={9}>
            <path d="M0 4.500h9" stroke="#ddd" />
          </Svg>
        </button>
        <button aria-label="Wiederherstellen">
          <Svg s={9}>
            <path d="M.5 2.500h6v6h-6zM2.500 2.500V.5h6v6h-2" stroke="#eee" />
          </Svg>
        </button>
        <button aria-label="Fenster schließen">
          <Svg s={9}>
            <path d="M.5.500l8 8M8.500.500l-8 8" stroke="#eee" />
          </Svg>
        </button>
      </WindowButtons>
    </TitleBar>
    <MenuTabs>
      <MenuTab $file>Datei</MenuTab>
      <MenuTab>Vorschau</MenuTab>
      <MenuEnd>
        <Svg w={12} h={8}>
          <path d="M1 7l5-5 5 5" stroke="#777" strokeWidth="1.200" />
        </Svg>
        <Svg s={15}>
          <circle cx="7.500" cy="7.500" r="7.200" fill="#0f6cc4" />
          <path d="M5.500 6c0-3 4-3 4-.5 0 1.500-2 1.500-2 3.500M7.500 10.500v1.500" stroke="#fff" strokeWidth="1.200" />
        </Svg>
      </MenuEnd>
    </MenuTabs>
  </>
)

const Big = ({ icon, lines, ...rest }) => (
  <BigButton {...rest}>
    {icon}
    <span>
      {lines.map((line, i) => (
        <React.Fragment key={i}>
          {i > 0 && <br />}
          {line}
        </React.Fragment>
      ))}
    </span>
  </BigButton>
)

const CaretLine = styled.span`
  display: inline-flex;
  align-items: center;
  gap: 4px;
`

const RibbonBar = () => (
  <Ribbon>
    <Group $width={134}>
      <GroupBody $pad={6} $gap={1}>
        <Big $width={58} icon={<HandIcon />} lines={['Verschieben']} />
        <Big $width={58} icon={<TextSelectIcon />} lines={['Textauswahl']} />
      </GroupBody>
      <GroupLabel>Aktion</GroupLabel>
    </Group>
    <Group $width={214}>
      <GroupBody $pad={2}>
        <Big $width={46} disabled icon={<PrevPageIcon />} lines={['Vorherige', 'Seite']} />
        <Big $width={44} disabled icon={<PrevPageIcon next />} lines={['Nächste', 'Seite']} />
        <Stack>
          <PageField>
            Seite:
            <SelectBox $width={49} $tint>
              <select defaultValue="1">
                <option>1</option>
              </select>
              <Caret color="#555" />
            </SelectBox>
          </PageField>
          <SmallButton disabled>
            <ViewArrow />
            Eine Ansicht zurück
          </SmallButton>
          <SmallButton disabled>
            <ViewArrow next />
            Eine Ansicht weiter
          </SmallButton>
        </Stack>
      </GroupBody>
      <GroupLabel>Navigation</GroupLabel>
    </Group>
    <Group $width={240}>
      <GroupBody $pad={3} $gap={1}>
        <Big $width={40} $active icon={<ZoomAreaIcon />} lines={['Bereich', 'wählen']} />
        <Big $width={36} disabled icon={<Zoom100Icon />} lines={['100', '%']} />
        <Big $width={62} icon={<PageWidthIcon />} lines={['Seitenbreite']} />
        <Stack>
          <SmallButton>
            <LensIcon plus />
            Vergrößern
          </SmallButton>
          <SmallButton>
            <LensIcon />
            Verkleinern
          </SmallButton>
          <SmallButton>
            <ScreenIcon />
            Präsentation
            <Caret />
          </SmallButton>
        </Stack>
      </GroupBody>
      <GroupLabel>Zoom</GroupLabel>
    </Group>
    <Group $width={151}>
      <GroupBody $pad={4} $gap={1}>
        <Big $width={60} icon={<PrinterIcon />} lines={['Schnelldruck', <CaretLine key="c"><Caret /></CaretLine>]} />
        <Big $width={58} icon={<ExportIcon />} lines={['Exportieren', <CaretLine key="c"><Caret /></CaretLine>]} />
        <Stack $gap={13} $top={10}>
          <SmallPrinter />
          <MailIcon />
        </Stack>
      </GroupBody>
      <GroupLabel>Ausgabe</GroupLabel>
    </Group>
    <Group $width={159}>
      <GroupBody $pad={4}>
        <Stack $gap={11} $top={8}>
          <SmallButton as="div">
            <SelectBox $width={90}>
              <input aria-label="Suchbegriff" />
              <Caret />
            </SelectBox>
            <SmallButton>
              <BinocularsIcon />
              Suchen
            </SmallButton>
          </SmallButton>
          <CheckLabel>
            <CheckBox />
            Groß-/Kleinschreibung
          </CheckLabel>
        </Stack>
      </GroupBody>
      <GroupLabel>Suche</GroupLabel>
    </Group>
    <Group $width={138}>
      <GroupBody $pad={3}>
        <Big $width={54} disabled icon={<StopIcon />} lines={['Abbrechen']} />
        <Big
          $width={72}
          icon={<HashPageIcon />}
          lines={['Seiten', <CaretLine key="c">einschränken <Caret /></CaretLine>]}
        />
      </GroupBody>
      <GroupLabel>Erstellung</GroupLabel>
    </Group>
    <Group $width={82}>
      <GroupBody $pad={3}>
        <Big $width={72} icon={<ClosePreviewIcon />} lines={['Druckvorschau', 'schließen']} />
      </GroupBody>
    </Group>
  </Ribbon>
)

const ObjectRow = ({ item }) => (
  <TreeItem>
    {Array.from({ length: item.level }, (_, i) => (
      <Guide key={i} $on={i > 0} />
    ))}
    <Branch $kind={item.kind}>{item.kind === 'open' && <Chevron />}</Branch>
    {item.glass && (
      <CheckSlot>
        <Hourglass />
      </CheckSlot>
    )}
    {item.check && (
      <CheckSlot>
        <CheckBox $size={13} defaultChecked aria-label={item.name} />
      </CheckSlot>
    )}
    <TreeName $selected={item.selected}>
      <IconSlot>
        <ObjIcon type={item.icon} />
      </IconSlot>
      {item.name}
    </TreeName>
  </TreeItem>
)

const twisties = {
  open: (
    <Svg s={8}>
      <path d="M6.500 1v6h-6z" fill="#444" />
    </Svg>
  ),
  closed: (
    <Svg s={8}>
      <path d="M2 .5v7L6 4z" stroke="#999" />
    </Svg>
  ),
}

const LeftDock = () => (
  <Dock>
    <DockTitle>
      <h2>Objekte</h2>
      <button aria-label="Objekte schließen">
        <CloseX />
      </button>
    </DockTitle>
    <ObjectTools>
      {['add', 'addPage', '', 'props', 'del', 'cut', 'copy', 'paste', '', 'up', 'down', '', 'refs'].map((t, i) =>
        t ? (
          <button key={i} aria-label={t}>
            <ToolIcon type={t} />
          </button>
        ) : (
          <i key={i} />
        )
      )}
    </ObjectTools>
    <Combo>
      <input aria-label="Objekte durchsuchen" />
      <Chevron color="#888" />
    </Combo>
    <Scrolled $flex="440 1 0">
      <Tree>
        {objects.map((item, i) => (
          <ObjectRow key={i} item={item} />
        ))}
      </Tree>
      <ScrollTrack>
        <ScrollThumb $height="74%" $top="16px" />
      </ScrollTrack>
    </Scrolled>
    <DockTabs>
      <TabRule $width="11px" />
      <DockTab $width={56} $active>Objekte</DockTab>
      <DockTab $width={54}>Ebenen</DockTab>
      <DockTab $width={56}>Vorschau</DockTab>
      <TabRule />
    </DockTabs>

    <DockTitle $split>
      <h2>Eigenschaften</h2>
      <button aria-label="Eigenschaften schließen">
        <CloseX />
      </button>
    </DockTitle>
    <PropTools>
      <ToolToggle $on aria-label="Kategorien">
        <Svg s={14}>
          <path d="M.5 1.500h5v4h-5zM.5 8.500h5v4h-5zM2 3.500h2M2 10.500h2" stroke="#667" />
          <path d="M7.500 2.500h2M10.500 2.500h2M7.500 5h2M10.500 5h2M7.500 9.500h2M10.500 9.500h2M7.500 12h2M10.500 12h2" stroke="#667" />
        </Svg>
      </ToolToggle>
      <ToolToggle aria-label="Alphabetisch">
        <Svg w={14} h={16}>
          <path d="M1.500 7L4 1l2.500 6M2.500 5h3M1.500 9.500h5l-5 5.500h5" stroke="#444" strokeWidth="1.300" />
          <path d="M10.500 1v12M8 11l2.500 3 2.500-3" stroke="#22229a" strokeWidth="1.500" />
        </Svg>
      </ToolToggle>
      <ToolToggle>[+]</ToolToggle>
      <ToolToggle aria-label="Favoriten">
        <Svg s={15}>
          <path d="M7.500.500l2.200 4.700 5 .6-3.700 3.500 1 5.100-4.500-2.500L3 14.400l1-5.100L.3 5.800l5-.6z" fill="#eec375" />
        </Svg>
      </ToolToggle>
      <Combo $grow>
        <input placeholder="Eigenschaften durchsuchen" aria-label="Eigenschaften durchsuchen" />
        <Chevron color="#888" />
      </Combo>
      <ToolToggle $on aria-label="Info">
        <Svg s={14}>
          <circle cx="7" cy="7" r="6.500" fill="#3f7fbf" />
          <path d="M7 2.500v2M7 5.500v6" stroke="#fff" strokeWidth="2" />
        </Svg>
      </ToolToggle>
    </PropTools>
    <Scrolled $flex="409 1 0">
      <PropTable>
        <tbody>
          {properties.map((p, i) => (
            <PropRow key={i} $head={p.head} $dim={p.dim}>
              <PropName scope="row" $head={p.head} $level={p.level || 0} $selected={p.selected}>
                <Twisty>{twisties[p.state]}</Twisty>
                {p.name}
              </PropName>
              {!p.head && (
                <PropValue $bold={p.bold}>
                  <span>
                    {p.swatch && <Swatch />}
                    {p.value}
                  </span>
                  {p.selected && (
                    <FormulaButton aria-label="Formel">
                      <Svg s={14}>
                        <path d="M1 8l2 4 3-9h7" stroke="#e0603f" strokeWidth="1.600" />
                        <path d="M12 6v5.500M12 9a2 2 0 1 0-1 2" stroke="#666" strokeWidth="1.300" />
                      </Svg>
                    </FormulaButton>
                  )}
                </PropValue>
              )}
            </PropRow>
          ))}
        </tbody>
      </PropTable>
      <ScrollTrack>
        <ScrollThumb $height="17px" $top="137px" />
      </ScrollTrack>
    </Scrolled>
    <HelpText>
      <h3>Rahmen-Voreinstellung.Links.Abstand</h3>
      <p>Der Abstand zwischen der Kante des Inhalts und dem Rahmen.</p>
    </HelpText>
  </Dock>
)

const ScrollArrows = () => (
  <ScrollTrack $arrows $pad="7px 0">
    <Svg w={7} h={5}>
      <path d="M0 5h7L3.500 0z" fill="#a6a6a6" />
    </Svg>
    <Svg w={7} h={5}>
      <path d="M0 0h7L3.500 5z" fill="#a6a6a6" />
    </Svg>
  </ScrollTrack>
)

const Invoice = () => (
  <Paper>
    <FoldMark $top="35.4%" />
    <FoldMark $top="50%" $punch />
    <FoldMark $top="70.7%" />
    <Letter>
      <Logo>
        <LogoTiles />
        MUSTERLOGO
      </Logo>
      <LetterHead>
        <Address as="div">
          <small>Sportbedarf Sommer GmbH · Sonnenstraße 124 · 50354 Hürth</small>
          <span>Frau Ursula Müller</span>
          <span>Hauptstraße 1</span>
          <span>10117 BERLIN</span>
          <DocTitle>Auftrag</DocTitle>
        </Address>
        <Address $right>
          <strong>Sportbedarf Sommer GmbH</strong>
          <span>Christian Sommer</span>
          <span>Sonnenstraße 124</span>
          <span>50354 Hürth</span>
          <Phone>Tel: 02233/61414250</Phone>
          <span>Fax: 02233/61414251</span>
          <span>E-Mail: jtltestuser@gmx.de</span>
          <span>Web: http://www.sportbedarf-sommer.de</span>
          <Meta>
            <dt>Auftrags-Nr:</dt>
            <dd>AU2024051384</dd>
            <dt>Datum:</dt>
            <dd>10.05.2024</dd>
            <dt>Kunden-Nr:</dt>
            <dd>KU2016040</dd>
          </Meta>
        </Address>
      </LetterHead>
      <Items>
        <colgroup>
          <col width="51" />
          <col width="20" />
          <col width="40" />
          <col width="88" />
          <col />
          <col width="64" />
          <col width="71" />
          <col width="87" />
        </colgroup>
        <thead>
          <tr>
            <th>Pos.</th>
            <th colSpan={2}>Menge</th>
            <th>Art.-Nr.</th>
            <th>Bezeichnung</th>
            <th className="num">MwSt.</th>
            <th className="num">E.-Preis</th>
            <th className="num">G.-Preis</th>
          </tr>
        </thead>
        <tbody>
          <tr>
            <td>1</td>
            <td className="num">1,00</td>
            <td className="unit">Stck.</td>
            <td>AR2016046-STL</td>
            <td>Langhantelset, inkl. Stange und 8 Gewichten</td>
            <td className="num">19,00 %</td>
            <td className="num">49,99 €</td>
            <td className="num">49,99 €</td>
          </tr>
        </tbody>
      </Items>
      <Components>
        <caption>Komponenten:</caption>
        <colgroup>
          <col width="191" />
          <col width="155" />
          <col width="66" />
          <col />
        </colgroup>
        <tbody>
          {parts.map(([name, no, qty]) => (
            <tr key={no}>
              <td>{name}</td>
              <td>{no}</td>
              <td>{qty}</td>
              <td />
            </tr>
          ))}
        </tbody>
      </Components>
      <Items>
        <colgroup>
          <col width="51" />
          <col width="20" />
          <col width="128" />
          <col />
          <col width="64" />
          <col width="71" />
          <col width="87" />
        </colgroup>
        <tbody>
          <tr>
            <td>2</td>
            <td className="num">1,00</td>
            <td />
            <td>DHL-Paket (31 kg)</td>
            <td className="num">19,00 %</td>
            <td className="num">13,99 €</td>
            <td className="num">13,99 €</td>
          </tr>
        </tbody>
      </Items>
      <Totals $wide $top={18}>
        <tbody>
          <tr>
            <th>Gesamt Netto (19,00 %)</th>
            <td>53,76 €</td>
          </tr>
          <tr>
            <th>zzgl. MwSt (19,00 %)</th>
            <td>10,22 €</td>
          </tr>
          <tr className="sum">
            <th>Rechnungsbetrag</th>
            <td>63,98 €</td>
          </tr>
        </tbody>
      </Totals>
      <Totals $top={7}>
        <tbody>
          <tr className="sum">
            <th>Zahlbetrag</th>
            <td>63,98 €</td>
          </tr>
        </tbody>
      </Totals>
      <Terms>Das Zahlungsziel beträgt 14 Tage ab Rechnungsdatum.</Terms>
      <PageNo>Seite: 1</PageNo>
    </Letter>
    <PaperFoot>
      <p>{'Ust-IdNr: DE999999999\nGläubiger-ID:'}</p>
      <p>{'Bankverbindung\nHürther Bank\nIBAN: DE12123123123123123123\nBIC: HUDEHUBA'}</p>
    </PaperFoot>
  </Paper>
)

const Preview = () => (
  <Center>
    <PreviewArea>
      <Thumbs>
        <Thumb aria-label="Seite 1">
          <PageThumbnail />
        </Thumb>
        1
      </Thumbs>
      <ScrollArrows />
      <Splitter />
      <Canvas>
        <PageFrame>
          <Invoice />
        </PageFrame>
      </Canvas>
      <ScrollArrows />
    </PreviewArea>
    <DockTabs>
      <TabRule $width="12px" />
      <DockTab $width={94}>Layout</DockTab>
      <DockTab $width={93}>Layout-Vorschau</DockTab>
      <DockTab $width={94} $active>Vorschau</DockTab>
      <TabRule />
    </DockTabs>
  </Center>
)

const RightDock = () => (
  <Dock $white $size={11}>
    <DockTitle>
      <h2>Variablen/Felder</h2>
      <button aria-label="Variablen schließen">
        <CloseX />
      </button>
    </DockTitle>
    <Combo>
      <input placeholder="Variablen/Felder durchsuchen" aria-label="Variablen/Felder durchsuchen" />
      <Chevron color="#888" />
    </Combo>
    <FilterRow>
      <VarList>
        {variables.map(([name, icon]) => (
          <VarItem key={name}>
            <Branch $tight $kind={icon === 'sum' ? 'leaf' : 'closed'}>
              {icon !== 'sum' && <Chevron dir="right" color="#999" />}
            </Branch>
            <VarItemIcon>
              <FolderIcon type={icon} />
            </VarItemIcon>
            {name}
          </VarItem>
        ))}
      </VarList>
      <Svg w={9} h={12}>
        <path d="M0 1h12L7.500 6v5H4.500V6z" fill="#777" />
      </Svg>
    </FilterRow>
  </Dock>
)

const StatusBar = () => (
  <Status>
    <Coords>84.20, 298.84</Coords>
    <ObjectInfo>
      {'Berichtscontainer "Table area / report container"  -  20.00 mm, 115.00 mm  -  190.01 mm, 267.01 mm  =  170.01 mm, 152.01 mm (Basis)'}
    </ObjectInfo>
    <ZoomTools>
      100%
      <button aria-label="Verkleinern">
        <RoundZoom />
      </button>
      <ZoomScale>
        <ZoomSlider defaultValue="50" aria-label="Zoom" />
        <Ticks>
          <i />
          <i />
          <i />
        </Ticks>
      </ZoomScale>
      <button aria-label="Vergrößern">
        <RoundZoom plus />
      </button>
    </ZoomTools>
  </Status>
)

const App = () => (
  <Window>
    <GlobalStyle />
    <Header />
    <RibbonBar />
    <Workspace>
      <LeftDock />
      <Preview />
      <RightDock />
    </Workspace>
    <StatusBar />
  </Window>
)

export default App
